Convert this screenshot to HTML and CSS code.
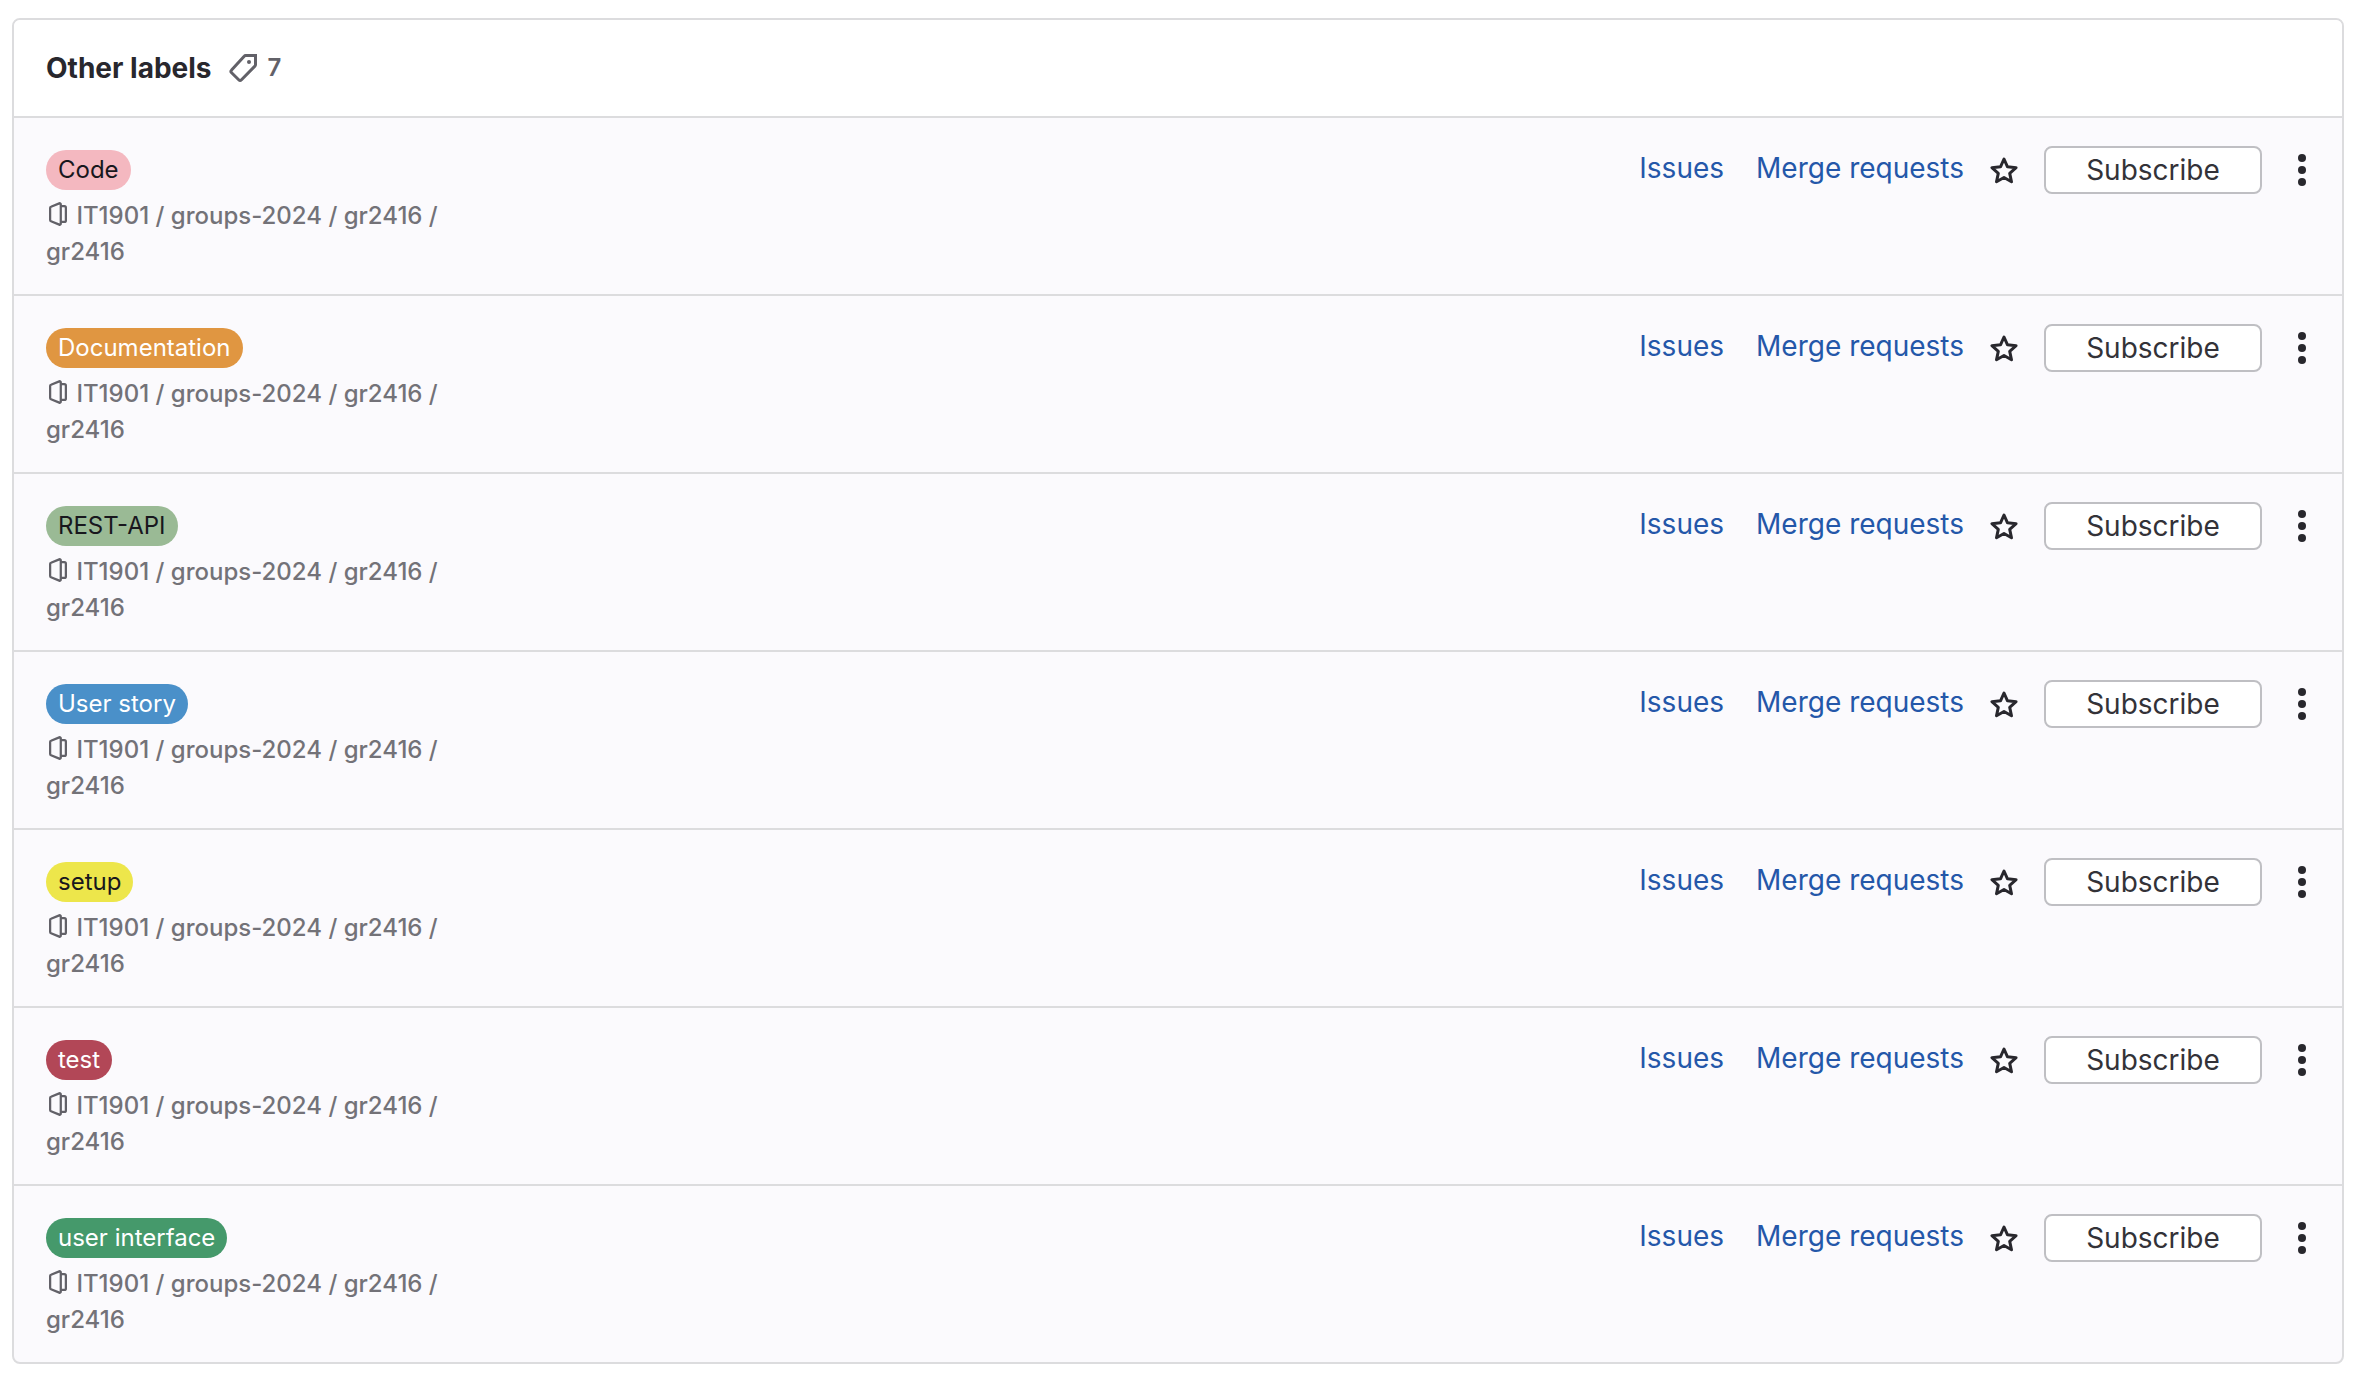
FILE: index.html
```html
<!DOCTYPE html>
<html lang="en">
<head>
<meta charset="utf-8">
<title>Labels</title>
<meta name="viewport" content="width=device-width, initial-scale=1">
<link rel="stylesheet" href="styles.css">
</head>
<body>
<svg class="icon-defs" aria-hidden="true">
  <symbol id="icon-label" viewBox="0 0 16 16">
    <path d="M9.4 1.75h4.85v4.6a1 1 0 0 1-.3.7L7.25 13.9a1 1 0 0 1-1.4 0L2.3 10.4a1 1 0 0 1 0-1.4l6.3-6.9a1 1 0 0 1 .8-.35z" fill="none" stroke="currentColor" stroke-width="1.5"/>
    <circle cx="11" cy="5" r="1" fill="currentColor"/>
  </symbol>
  <symbol id="icon-project" viewBox="0 0 16 16">
    <path d="M2.75 4.05v7.9c0 .4.2.7.6.85l5.5 2.3c.5.2 1-.1 1-.65V1.55c0-.55-.5-.85-1-.65l-5.5 2.3a.9.9 0 0 0-.6.85zM9.9 2.75h2.35a1 1 0 0 1 1 1v8.5a1 1 0 0 1-1 1H9.9" fill="none" stroke="currentColor" stroke-width="1.5"/>
  </symbol>
  <symbol id="icon-star" viewBox="0 0 16 16">
    <path d="M8 2.5l1.75 3.9 4.3.45-3.2 2.85.9 4.2L8 11.75 4.25 13.9l.9-4.2-3.2-2.85 4.3-.45z" fill="none" stroke="currentColor" stroke-width="1.5" stroke-linejoin="round"/>
  </symbol>
  <symbol id="icon-more" viewBox="0 0 16 16">
    <circle cx="8" cy="2" r="2"/><circle cx="8" cy="8" r="2"/><circle cx="8" cy="14" r="2"/>
  </symbol>
</svg>
<main class="card">
  <header class="card-header">
    <h2 class="card-title">Other labels</h2>
    <span class="count"><svg class="icon"><use href="#icon-label"/></svg>7</span>
  </header>
  <ul class="label-list">
    <li class="label-row">
      <div class="label-name">
        <a class="label label-code" href="#">Code</a>
        <div class="label-path"><svg class="icon-small"><use href="#icon-project"/></svg> IT1901 / groups-2024 / gr2416 / gr2416</div>
      </div>
      <div class="label-actions">
        <a class="link" href="#">Issues</a>
        <a class="link" href="#">Merge requests</a>
        <button class="icon-button" type="button" aria-label="Prioritize"><svg class="icon"><use href="#icon-star"/></svg></button>
        <button class="subscribe" type="button">Subscribe</button>
        <button class="icon-button" type="button" aria-label="Label actions"><svg class="icon"><use href="#icon-more"/></svg></button>
      </div>
    </li>
    <li class="label-row">
      <div class="label-name">
        <a class="label label-documentation" href="#">Documentation</a>
        <div class="label-path"><svg class="icon-small"><use href="#icon-project"/></svg> IT1901 / groups-2024 / gr2416 / gr2416</div>
      </div>
      <div class="label-actions">
        <a class="link" href="#">Issues</a>
        <a class="link" href="#">Merge requests</a>
        <button class="icon-button" type="button" aria-label="Prioritize"><svg class="icon"><use href="#icon-star"/></svg></button>
        <button class="subscribe" type="button">Subscribe</button>
        <button class="icon-button" type="button" aria-label="Label actions"><svg class="icon"><use href="#icon-more"/></svg></button>
      </div>
    </li>
    <li class="label-row">
      <div class="label-name">
        <a class="label label-rest" href="#">REST-API</a>
        <div class="label-path"><svg class="icon-small"><use href="#icon-project"/></svg> IT1901 / groups-2024 / gr2416 / gr2416</div>
      </div>
      <div class="label-actions">
        <a class="link" href="#">Issues</a>
        <a class="link" href="#">Merge requests</a>
        <button class="icon-button" type="button" aria-label="Prioritize"><svg class="icon"><use href="#icon-star"/></svg></button>
        <button class="subscribe" type="button">Subscribe</button>
        <button class="icon-button" type="button" aria-label="Label actions"><svg class="icon"><use href="#icon-more"/></svg></button>
      </div>
    </li>
    <li class="label-row">
      <div class="label-name">
        <a class="label label-story" href="#">User story</a>
        <div class="label-path"><svg class="icon-small"><use href="#icon-project"/></svg> IT1901 / groups-2024 / gr2416 / gr2416</div>
      </div>
      <div class="label-actions">
        <a class="link" href="#">Issues</a>
        <a class="link" href="#">Merge requests</a>
        <button class="icon-button" type="button" aria-label="Prioritize"><svg class="icon"><use href="#icon-star"/></svg></button>
        <button class="subscribe" type="button">Subscribe</button>
        <button class="icon-button" type="button" aria-label="Label actions"><svg class="icon"><use href="#icon-more"/></svg></button>
      </div>
    </li>
    <li class="label-row">
      <div class="label-name">
        <a class="label label-setup" href="#">setup</a>
        <div class="label-path"><svg class="icon-small"><use href="#icon-project"/></svg> IT1901 / groups-2024 / gr2416 / gr2416</div>
      </div>
      <div class="label-actions">
        <a class="link" href="#">Issues</a>
        <a class="link" href="#">Merge requests</a>
        <button class="icon-button" type="button" aria-label="Prioritize"><svg class="icon"><use href="#icon-star"/></svg></button>
        <button class="subscribe" type="button">Subscribe</button>
        <button class="icon-button" type="button" aria-label="Label actions"><svg class="icon"><use href="#icon-more"/></svg></button>
      </div>
    </li>
    <li class="label-row">
      <div class="label-name">
        <a class="label label-test" href="#">test</a>
        <div class="label-path"><svg class="icon-small"><use href="#icon-project"/></svg> IT1901 / groups-2024 / gr2416 / gr2416</div>
      </div>
      <div class="label-actions">
        <a class="link" href="#">Issues</a>
        <a class="link" href="#">Merge requests</a>
        <button class="icon-button" type="button" aria-label="Prioritize"><svg class="icon"><use href="#icon-star"/></svg></button>
        <button class="subscribe" type="button">Subscribe</button>
        <button class="icon-button" type="button" aria-label="Label actions"><svg class="icon"><use href="#icon-more"/></svg></button>
      </div>
    </li>
    <li class="label-row">
      <div class="label-name">
        <a class="label label-ui" href="#">user interface</a>
        <div class="label-path"><svg class="icon-small"><use href="#icon-project"/></svg> IT1901 / groups-2024 / gr2416 / gr2416</div>
      </div>
      <div class="label-actions">
        <a class="link" href="#">Issues</a>
        <a class="link" href="#">Merge requests</a>
        <button class="icon-button" type="button" aria-label="Prioritize"><svg class="icon"><use href="#icon-star"/></svg></button>
        <button class="subscribe" type="button">Subscribe</button>
        <button class="icon-button" type="button" aria-label="Label actions"><svg class="icon"><use href="#icon-more"/></svg></button>
      </div>
    </li>
  </ul>
</main>
</body>
</html>
```
FILE: styles.css
```css
* {
  box-sizing: border-box;
}

body {
  margin: 0;
  padding: 18px 16px 18px 12px;
  background: #fff;
  color: #28272d;
  font-family: Inter, "Liberation Sans", sans-serif;
  font-size: 28px;
  line-height: 40px;
}

.icon-defs {
  display: none;
}

.icon {
  width: 32px;
  height: 32px;
}

.icon-small {
  width: 24px;
  height: 24px;
}

.card {
  background: #fbfafd;
  border: 2px solid #dcdcde;
  border-radius: 8px;
  overflow: hidden;
}

.card-header {
  display: flex;
  align-items: center;
  gap: 16px;
  padding: 28px 32px;
  background: #fff;
  border-bottom: 2px solid #dcdcde;
}

.card-title {
  margin: 0;
  font-size: 28px;
  font-weight: 700;
}

.count {
  display: flex;
  align-items: center;
  gap: 8px;
  color: #626168;
  font-size: 24px;
  font-weight: 600;
}

.label-list {
  margin: 0;
  padding: 0;
  list-style: none;
}

.label-row {
  display: flex;
  justify-content: space-between;
  align-items: flex-start;
  padding: 28px 24px 24px 32px;
}

.label-row + .label-row {
  border-top: 2px solid #dcdcde;
}

.label-name {
  width: 400px;
  padding-top: 4px;
}

.label {
  display: block;
  width: fit-content;
  padding: 4px 12px;
  border-radius: 20px;
  font-size: 24px;
  line-height: 32px;
  text-decoration: none;
  color: #fff;
}

.label-code {
  background: #f4b8c0;
  color: #18171d;
}

.label-documentation {
  background: #e09641;
}

.label-rest {
  background: #9aba95;
  color: #18171d;
}

.label-story {
  background: #4a90c9;
}

.label-setup {
  background: #ede64b;
  color: #18171d;
}

.label-test {
  background: #b24757;
}

.label-ui {
  background: #45996b;
}

.label-path {
  padding-top: 8px;
  color: #737278;
  font-size: 24px;
  font-weight: 500;
  line-height: 36px;
}

.label-path .icon-small {
  color: #626168;
  vertical-align: -2px;
}

.label-actions {
  display: flex;
  align-items: center;
}

.link {
  margin-right: 32px;
  padding-bottom: 4px;
  color: #2457a9;
  text-decoration: none;
}

.link + .icon-button {
  margin-left: -8px;
}

.icon-button {
  display: flex;
  align-items: center;
  justify-content: center;
  width: 32px;
  height: 48px;
  padding: 0;
  border: 0;
  background: none;
  color: #28272d;
}

.icon-button svg {
  fill: currentColor;
}

.subscribe {
  width: 218px;
  height: 48px;
  margin: 0 24px;
  padding: 0;
  border: 2px solid #bfbfc3;
  border-radius: 8px;
  background: #fff;
  color: #333238;
  font: inherit;
}
```
